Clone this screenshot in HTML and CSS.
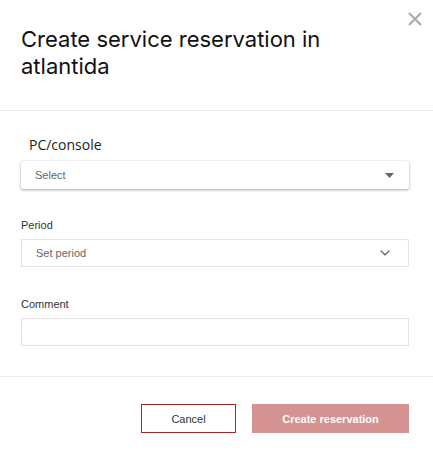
FILE: index.html
```html
<!DOCTYPE html>
<html>
<head>
<meta charset="utf-8">
<link rel="stylesheet" href="styles.css">
</head>
<body>
<div class="modal">
  <button class="close" aria-label="Close">
    <svg width="14" height="14" viewBox="0 0 14 14"><path d="M1 1L13 13M13 1L1 13" stroke="#a9a9a9" stroke-width="2" fill="none"/></svg>
  </button>
  <header class="head">
    <h1 class="title">Create service reservation in atlantida</h1>
  </header>
  <section class="form">
    <label class="label-big">PC/console</label>
    <div class="select shadow">
      <span class="placeholder">Select</span>
      <svg class="caret" width="9" height="5" viewBox="0 0 9 5"><path d="M0 0H9L4.5 5Z" fill="#666"/></svg>
    </div>
    <label class="label">Period</label>
    <div class="select bordered">
      <span class="placeholder">Set period</span>
      <svg class="chev" width="10" height="6" viewBox="0 0 10 6"><path d="M0.7 0.7L5 5L9.3 0.7" stroke="#555" stroke-width="1.2" fill="none"/></svg>
    </div>
    <label class="label">Comment</label>
    <div class="select bordered"></div>
  </section>
  <footer class="foot">
    <button class="btn cancel">Cancel</button>
    <button class="btn create">Create reservation</button>
  </footer>
</div>
</body>
</html>
```
FILE: styles.css
```css
html, body {
  margin: 0;
  padding: 0;
  background: #fff;
}
.modal {
  position: relative;
  width: 433px;
  height: 454px;
  background: #fff;
  font-family: "Liberation Sans", Arial, sans-serif;
}
.close {
  position: absolute;
  top: 12px;
  left: 408px;
  width: 14px;
  height: 14px;
  padding: 0;
  border: 0;
  background: none;
  display: block;
}
.close svg { display: block; }
.head {
  padding: 26px 80px 0 21px;
  height: 84px;
  border-bottom: 1px solid #ececec;
}
.title {
  margin: 0;
  font-family: Inter, sans-serif;
  font-weight: 400;
  font-size: 22px;
  line-height: 27px;
  color: #111;
}
.form {
  padding: 25px 24px 30px 21px;
  display: flex;
  flex-direction: column;
  border-bottom: 1px solid #ececec;
}
.label-big {
  font-family: "Open Sans", sans-serif;
  font-size: 14px;
  line-height: 18px;
  color: #222;
  padding-left: 8px;
  margin-bottom: 7px;
}
.label {
  font-size: 11px;
  line-height: 14px;
  color: #333;
  margin-top: 29px;
  margin-bottom: 7px;
}
.label + .select + .label { margin-top: 30px; }
.select {
  height: 28px;
  box-sizing: border-box;
  display: flex;
  align-items: center;
  justify-content: space-between;
  padding: 0 18px 0 14px;
  background: #fff;
}
.shadow {
  box-shadow: 0 1px 3px rgba(0,0,0,0.32), 0 0 1px rgba(0,0,0,0.2);
  border-radius: 2px;
  padding-right: 15px;
}
.bordered {
  border: 1px solid #e4e4e4;
  box-shadow: inset 0 0 2px rgba(0,0,0,0.06);
}
.placeholder {
  font-size: 11px;
  color: #666;
}
.caret, .chev { display: block; }
.foot {
  display: flex;
  justify-content: flex-end;
  gap: 16px;
  padding: 27px 24px 0 0;
}
.btn {
  height: 29px;
  box-sizing: border-box;
  font-family: "Liberation Sans", Arial, sans-serif;
  font-size: 11px;
  padding: 0;
}
.cancel {
  width: 95px;
  background: #fff;
  border: 1px solid #a82525;
  color: #333;
}
.create {
  width: 157px;
  background: #d49292;
  border: 0;
  color: #fff;
  font-weight: 700;
}
```
